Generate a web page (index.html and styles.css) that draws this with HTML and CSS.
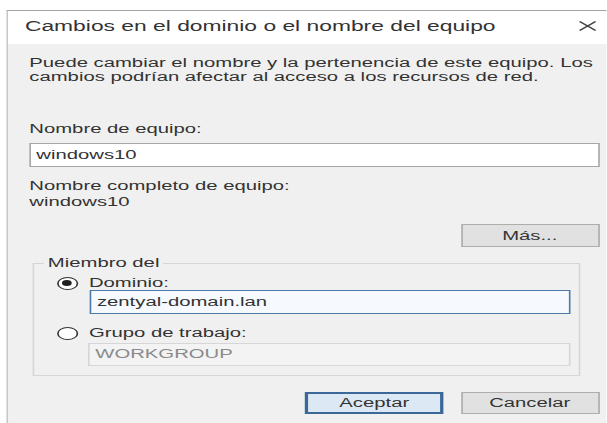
FILE: index.html
```html
<!DOCTYPE html>
<html lang="es">
<head>
<meta charset="utf-8">
<title>Cambios en el dominio o el nombre del equipo</title>
<link rel="stylesheet" href="styles.css">
</head>
<body>
<div class="stage">
  <div class="window">
    <div class="titlebar">
      <span class="title">Cambios en el dominio o el nombre del equipo</span>
      <svg class="close" width="11" height="10" viewBox="0 0 11 10" aria-hidden="true">
        <path d="M0.6 0.5 L10.4 9.5 M10.4 0.5 L0.6 9.5" stroke="#444" stroke-width="1.1" fill="none"/>
      </svg>
    </div>
    <div class="content">
      <p class="intro">Puede cambiar el nombre y la pertenencia de este equipo. Los<br>cambios podrían afectar al acceso a los recursos de red.</p>

      <div class="label name-label">Nombre de equipo:</div>
      <div class="field">windows10</div>

      <div class="label full-label">Nombre completo de equipo:</div>
      <div class="label">windows10</div>

      <div class="more-row">
        <button class="btn">Más...</button>
      </div>

      <fieldset class="group">
        <legend>Miembro del</legend>
        <div class="radio-row">
          <span class="radio checked"></span><span>Dominio:</span>
        </div>
        <div class="field focus">zentyal-domain.lan</div>
        <div class="radio-row second">
          <span class="radio"></span><span>Grupo de trabajo:</span>
        </div>
        <div class="field disabled">WORKGROUP</div>
      </fieldset>

      <div class="actions">
        <button class="btn primary">Aceptar</button>
        <button class="btn">Cancelar</button>
      </div>
    </div>
  </div>
</div>
</body>
</html>
```
FILE: styles.css
```css
html, body {
  margin: 0;
  background: #ffffff;
  overflow: hidden;
}

body {
  font-family: "Liberation Sans", Arial, sans-serif;
  font-size: 12.45px;
  color: #333;
}

/* the dialog is laid out at its native width and stretched horizontally */
.stage {
  width: 372.4px;
  height: 423px;
  transform: scaleX(1.63);
  transform-origin: 0 0;
}

.window {
  margin: 10px 0 0 4.3px;
  height: 413px;
  box-sizing: border-box;
  border-top: 1px solid #a2a2a2;
  border-left: 1px solid #c6c6c6;
  display: flex;
  flex-direction: column;
}

.titlebar {
  flex: none;
  height: 33px;
  box-sizing: border-box;
  padding: 7px 6.9px 0 10px;
  background: #ffffff;
  display: flex;
  justify-content: space-between;
  align-items: flex-start;
}

.title {
  font-size: 14px;
  line-height: 16px;
  color: #333;
}

.close {
  margin-top: 3px;
  flex: none;
}

.content {
  flex: 1;
  background: #f0f0f0;
  padding: 12px 4.9px 0 12.7px;
}

.intro {
  margin: 0;
  line-height: 14px;
  white-space: nowrap;
}

.label {
  display: block;
  line-height: 16px;
  white-space: nowrap;
}

.name-label {
  margin-top: 37px;
}

.field {
  margin-top: 6px;
  height: 24px;
  box-sizing: border-box;
  border: 1px solid #a6a6a6;
  background: #ffffff;
  padding: 0 3.3px;
  line-height: 22px;
  white-space: nowrap;
}

.full-label {
  margin-top: 11px;
}

.more-row {
  display: flex;
  justify-content: flex-end;
  margin-top: 14px;
}

.btn {
  width: 85px;
  height: 23px;
  box-sizing: border-box;
  padding: 0;
  font: inherit;
  color: #333;
  background: #e1e1e1;
  border: 1px solid #adadad;
}

.group {
  margin: 8px 11.7px 0 2.2px;
  padding: 0 0 9px 0;
  border: 1px solid #d6d6d6;
  min-width: 0;
}

.group legend {
  padding: 0 2px;
  margin-left: 6.2px;
  line-height: 16px;
}

.radio-row {
  display: flex;
  align-items: center;
  gap: 6.6px;
  height: 14px;
  margin: 5px 0 0 13.8px;
  white-space: nowrap;
}

.radio-row.second {
  margin-top: 12px;
}

.radio {
  flex: none;
  width: 13px;
  height: 13px;
  box-sizing: border-box;
  border: 1px solid #333;
  border-radius: 50%;
  background: #ffffff;
  display: flex;
  align-items: center;
  justify-content: center;
}

.radio.checked::after {
  content: "";
  width: 6px;
  height: 6px;
  border-radius: 50%;
  background: #1f1f1f;
}

.group .field {
  margin: 0 4.5px 0 34px;
}

.field.focus {
  border-color: #4d7aa7;
  background: #f6fafe;
}

.group .field.disabled {
  margin-top: 3px;
  margin-left: 33px;
  height: 23px;
  line-height: 21px;
  background: #f3f3f3;
  border-color: #d6d6d6;
  color: #8a8a8a;
}

.actions {
  display: flex;
  justify-content: flex-end;
  gap: 10.4px;
  margin-top: 16px;
}

.actions .btn {
  height: 22px;
}

.btn.primary {
  border: 2px solid #3b6897;
  background: #dce8f4;
}
```
